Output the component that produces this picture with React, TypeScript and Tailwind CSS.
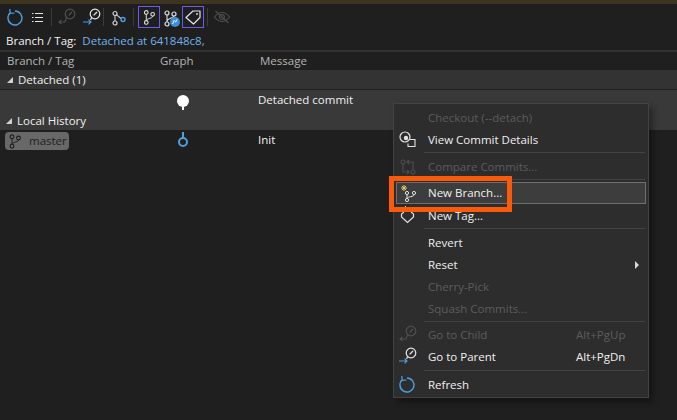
import React from "react";

const font = { fontFamily: '"Open Sans", "Noto Sans", sans-serif' };

function Svg({ w, h, children, className }: { w: number; h: number; children: React.ReactNode; className?: string }) {
  return (
    <svg width={w} height={h} viewBox={`0 0 ${w} ${h}`} fill="none" className={className}>
      {children}
    </svg>
  );
}

function RefreshIcon() {
  return (
    <Svg w={20} h={20}>
      <path d="M5.3 5.8A7 7 0 1 0 10 4" stroke="#4b9fe1" strokeWidth="1.4" />
      <path d="M4.8 2 5.2 6.4 9.6 6" stroke="#4b9fe1" strokeWidth="1.2" />
    </Svg>
  );
}

function ListIcon() {
  return (
    <Svg w={20} h={20}>
      <g stroke="#e4e4e4" strokeWidth="1">
        <path d="M5 6.5h1.5M8 6.5h8M5 10.5h1.5M8 10.5h8M5 14.5h1.5M8 14.5h8" />
      </g>
    </Svg>
  );
}

function Dial({ cx, cy, color }: { cx: number; cy: number; color: string }) {
  return (
    <g stroke={color}>
      <circle cx={cx} cy={cy} r="4.8" strokeWidth="1.2" />
      <path d={`M${cx - 1.4} ${cy + 1.4} L${cx + 2} ${cy - 2}`} strokeWidth="1.3" />
    </g>
  );
}

function GoChild() {
  return (
    <Svg w={22} h={22}>
      <Dial cx={14} cy={8} color="#505050" />
      <path d="M10.5 11.5 9 16H3M5.5 13.8 3 16l2.5 2.2" stroke="#505050" strokeWidth="1.1" />
    </Svg>
  );
}

function GoParent() {
  return (
    <Svg w={22} h={22}>
      <Dial cx={14} cy={8} color="#e8e8e8" />
      <path d="M10.5 11.5 9.6 14" stroke="#e8e8e8" strokeWidth="1.1" />
      <path d="M2 16h8M7.5 13.6 10 16l-2.5 2.4" stroke="#4b9fe1" strokeWidth="1.2" />
    </Svg>
  );
}

function BranchBlue() {
  return (
    <Svg w={22} h={22}>
      <circle cx="7" cy="7.5" r="2" stroke="#cfcfcf" strokeWidth="1.2" />
      <circle cx="7" cy="17" r="2" stroke="#cfcfcf" strokeWidth="1.2" />
      <path d="M7 9.5V15M8.6 8.8 13 12.5" stroke="#cfcfcf" strokeWidth="1.1" />
      <circle cx="15" cy="13.5" r="2" stroke="#4b9fe1" strokeWidth="1.4" />
    </Svg>
  );
}

function Branch() {
  return (
    <Svg w={22} h={22}>
      <circle cx="8" cy="6" r="2" stroke="#dedede" strokeWidth="1.2" />
      <circle cx="8" cy="17" r="2" stroke="#dedede" strokeWidth="1.2" />
      <circle cx="15" cy="8" r="2" stroke="#dedede" strokeWidth="1.2" />
      <path d="M8 8v7M15 10c0 3-6 2-7 5" stroke="#dedede" strokeWidth="1.1" />
    </Svg>
  );
}

function BranchBadge() {
  return (
    <Svg w={22} h={22}>
      <circle cx="7" cy="7" r="2" stroke="#dedede" strokeWidth="1.2" />
      <circle cx="7" cy="18" r="2" stroke="#dedede" strokeWidth="1.2" />
      <circle cx="14" cy="8" r="2" stroke="#dedede" strokeWidth="1.2" />
      <path d="M7 9v7M14 10c0 2-6 2-7 5" stroke="#dedede" strokeWidth="1.1" />
      <circle cx="15" cy="16" r="5" fill="#3a8fd8" />
      <path d="M12.6 18c1-2 .8-2.6 1.6-3.6.8 1 1 1.6 1.6 1.6.4-1 .8-2 1.2-2.6" stroke="#fff" strokeWidth="1" />
    </Svg>
  );
}

function TagIcon() {
  return (
    <Svg w={20} h={20}>
      <path d="M3 10.5 10 4H17V10.5L10.5 17Z" stroke="#e4e4e4" strokeWidth="1.2" strokeLinejoin="round" />
      <circle cx="14" cy="7" r="0.9" fill="#e4e4e4" />
    </Svg>
  );
}

function EyeOff() {
  return (
    <Svg w={22} h={22}>
      <path d="M3.5 11C6 7.5 8.5 6.5 11 6.5S16 7.5 18.5 11C16 14.5 13.5 15.5 11 15.5S6 14.5 3.5 11Z" stroke="#4d4d4d" strokeWidth="1.1" />
      <circle cx="11" cy="11" r="2.4" stroke="#4d4d4d" strokeWidth="1.1" />
      <path d="M4.5 5 17.5 17" stroke="#4d4d4d" strokeWidth="1.2" />
    </Svg>
  );
}

function ToolSep({ className = "" }: { className?: string }) {
  return <div className={`w-px h-[18px] bg-[#3c3c3c] ${className}`} />;
}

function Slot({ children, className = "" }: { children: React.ReactNode; className?: string }) {
  return <div className={`w-[22px] h-[22px] flex items-center justify-center shrink-0 ${className}`}>{children}</div>;
}

function Toolbar() {
  return (
    <div className="h-[26px] flex items-center">
      <Slot className="ml-[4px]"><RefreshIcon /></Slot>
      <Slot><ListIcon /></Slot>
      <ToolSep className="ml-[3px]" />
      <Slot className="ml-[4px]"><GoChild /></Slot>
      <Slot className="ml-[3px]"><GoParent /></Slot>
      <ToolSep />
      <Slot className="ml-[4px]"><BranchBlue /></Slot>
      <ToolSep className="ml-[3px]" />
      <Slot className="ml-[4px] border border-[#6a5ce6]"><Branch /></Slot>
      <Slot><BranchBadge /></Slot>
      <Slot className="border border-[#6a5ce6]"><TagIcon /></Slot>
      <ToolSep className="ml-[3px]" />
      <Slot className="ml-[3px]"><EyeOff /></Slot>
    </div>
  );
}

function Tri() {
  return <span className="w-0 h-0 border-l-[6px] border-l-transparent border-b-[6px] border-b-[#d0d0d0] shrink-0" />;
}

function Table() {
  const cols = "grid grid-cols-[160px_100px_1fr]";
  return (
    <div className="text-[#f0f0f0]">
      <div className={`${cols} h-[18px] items-center text-[#b4b4b4] border-t-2 border-[#333333] box-content`}>
        <span className="pl-[7px]">Branch / Tag</span>
        <span>Graph</span>
        <span>Message</span>
      </div>
      <div className="h-[19px] bg-[#333333] flex items-center gap-[5px] pl-[7px]">
        <Tri />
        <span>Detached (1)</span>
      </div>
      <div className="h-px bg-[#1f1f1f]" />
      <div className="bg-[#393939]">
        <div className={`${cols} h-[21px] items-center`}>
          <span />
          <span className="pl-[16px]">
            <Svg w={14} h={21}>
              <circle cx="7" cy="11" r="6" fill="#ffffff" />
              <rect x="6" y="14" width="2" height="6" fill="#ffffff" />
            </Svg>
          </span>
          <span className="-ml-[2px] -mt-[2px]">Detached commit</span>
        </div>
        <div className="h-[19px] flex items-center gap-[5px] pl-[6px]">
          <Tri />
          <span>Local History</span>
        </div>
      </div>
      <div className={`${cols} h-[22px] items-center`}>
        <span className="pl-[5px]">
          <span className="w-[64px] h-[18px] rounded-[4px] bg-[#686868] text-[#1f1f1f] flex items-center pl-[4px] gap-[8px]">
            <Svg w={12} h={15}>
              <circle cx="3" cy="2.8" r="1.9" stroke="#1c1c1c" strokeWidth="1.1" />
              <circle cx="3" cy="12.2" r="1.9" stroke="#1c1c1c" strokeWidth="1.1" />
              <circle cx="9.5" cy="4" r="1.9" stroke="#1c1c1c" strokeWidth="1.1" />
              <path d="M3 4.7v5.6M9.5 6c0 2.4-5.5 1.6-6.5 4.3" stroke="#1c1c1c" strokeWidth="1" />
            </Svg>
            master
          </span>
        </span>
        <span className="pl-[16px]">
          <Svg w={14} h={22}>
            <path d="M7 2v6" stroke="#4f9fdf" strokeWidth="2" />
            <circle cx="7" cy="12" r="4" stroke="#4f9fdf" strokeWidth="2" />
          </Svg>
        </span>
        <span className="-ml-[2px] -mt-[3px]">Init</span>
      </div>
    </div>
  );
}

function Item({ label, dim, icon, shortcut, arrow, selected, className = "" }: {
  label: string;
  dim?: boolean;
  icon?: React.ReactNode;
  shortcut?: string;
  arrow?: boolean;
  selected?: boolean;
  className?: string;
}) {
  return (
    <div
      className={`h-[22px] flex items-center mr-[2px] ml-[2px] border ${selected ? "border-[#6f6f6f] bg-[#3d3d3d]" : "border-transparent"} ${dim ? "text-[#5c5c5c]" : "text-[#f0f0f0]"} ${className}`}
    >
      <div className="w-[31px] h-[20px] flex items-center justify-start shrink-0">{icon}</div>
      <span className="flex-1">{label}</span>
      {shortcut && <span className="w-[69px]">{shortcut}</span>}
      {arrow && <span className="w-0 h-0 mr-[6px] border-y-[4px] border-y-transparent border-l-[4px] border-l-[#d8d8d8]" />}
    </div>
  );
}

function Sep({ className }: { className: string }) {
  return <div className={`h-px bg-[#434343] ml-[30px] mr-[3px] ${className}`} />;
}

function DetailsIcon() {
  return (
    <Svg w={20} h={20}>
      <path d="M13 9.5h5v7h-7v-3" stroke="#e4e4e4" strokeWidth="1.1" />
      <circle cx="8" cy="7" r="5" stroke="#e4e4e4" strokeWidth="1.2" />
      <circle cx="9" cy="8" r="2.2" fill="#e4e4e4" />
    </Svg>
  );
}

function CompareIcon() {
  return (
    <Svg w={20} h={20}>
      <g stroke="#4d4d4d" strokeWidth="1.1">
        <circle cx="6" cy="5" r="2" />
        <circle cx="16" cy="15" r="2" />
        <path d="M6 7v8h6M10 13l2 2-2 2M16 13V5h-6M12 3l-2 2 2 2" />
      </g>
    </Svg>
  );
}

function NewBranchIcon() {
  return (
    <Svg w={20} h={20}>
      <path d="M7 2v6M4 5h6M5 3l4 4M9 3 5 7" stroke="#e8c468" strokeWidth="1" />
      <circle cx="10" cy="10" r="1.6" stroke="#e0e0e0" />
      <circle cx="10" cy="17" r="1.6" stroke="#e0e0e0" />
      <circle cx="17" cy="10" r="1.6" stroke="#e0e0e0" />
      <path d="M10 11.6v3.8M17 11.6c0 2.6-6 1.6-7 3.8" stroke="#e0e0e0" strokeWidth="1" />
    </Svg>
  );
}

function NewTagIcon() {
  return (
    <Svg w={20} h={20}>
      <path d="M7 6 4.5 8v3l6 5.5 6-5.5V8L14 6" stroke="#e0e0e0" strokeWidth="1.2" />
      <path d="M8.5 0v5M6 2.5h5" stroke="#e8c468" strokeWidth="1" />
    </Svg>
  );
}

function Menu() {
  return (
    <div className="absolute left-[393px] top-[103px] w-[256px] h-[295px] bg-[#2d2d2d] border border-[#434343] pt-[3px] text-[11.5px] shadow-[4px_4px_6px_rgba(0,0,0,0.35)]">
      <Item label="Checkout (--detach)" dim />
      <Item label="View Commit Details" icon={<DetailsIcon />} />
      <Sep className="mt-px mb-[3px]" />
      <Item label="Compare Commits..." dim icon={<CompareIcon />} />
      <Sep className="mt-px mb-[2px]" />
      <Item label="New Branch..." selected icon={<NewBranchIcon />} />
      <Item label="New Tag..." icon={<NewTagIcon />} className="mt-px" />
      <Sep className="mt-px mb-[3px]" />
      <Item label="Revert" />
      <Item label="Reset" arrow />
      <Item label="Cherry-Pick" dim />
      <Item label="Squash Commits..." dim />
      <Sep className="mt-px mb-[2px]" />
      <Item label="Go to Child" dim icon={<div className="-mt-[3px]"><GoChild /></div>} shortcut="Alt+PgUp" />
      <Item label="Go to Parent" icon={<div className="-mt-[3px]"><GoParent /></div>} shortcut="Alt+PgDn" />
      <Sep className="mt-[2px] mb-[3px]" />
      <Item label="Refresh" icon={<div className="-mt-[3px]"><RefreshIcon /></div>} />
    </div>
  );
}

export default function App() {
  return (
    <div className="relative w-[677px] h-[420px] overflow-hidden bg-[#1f1f1f] text-[11.5px]" style={font}>
      <div className="h-[4px] bg-[#3e3520]" />
      <Toolbar />
      <div className="h-[22px] flex items-center pl-[6px] gap-[6px]">
        <span className="text-[#f2f2f2] font-medium">Branch / Tag:</span>
        <span className="text-[#6fb2ea]">Detached at 641848c8,</span>
      </div>
      <div className="-mt-[2px]">
        <Table />
      </div>
      <Menu />
      <div className="absolute left-[389px] top-[176px] w-[123px] h-[36px] border-[5px] border-[#fb5a0b]" />
    </div>
  );
}
